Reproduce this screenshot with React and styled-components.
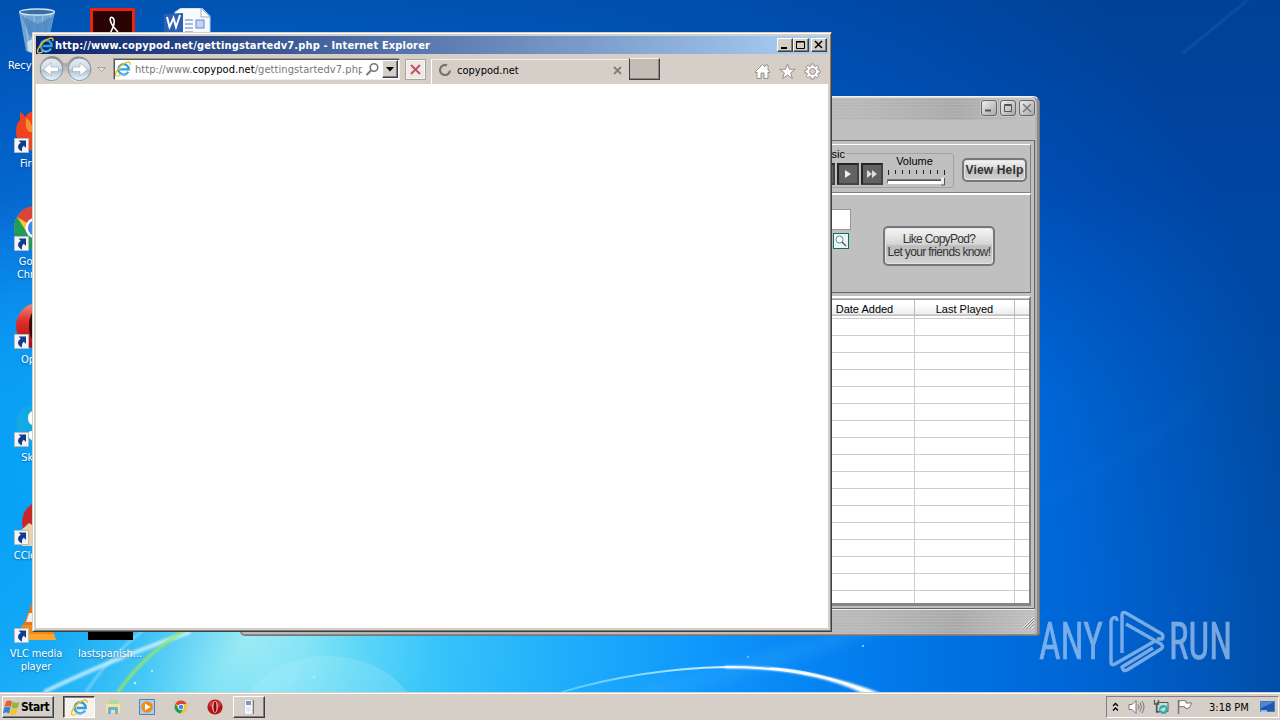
import React from 'react'
import styled, { createGlobalStyle, css } from 'styled-components'

const GlobalStyle = createGlobalStyle`
  * {
    box-sizing: border-box;
  }

  body {
    margin: 0;
    overflow: hidden;
    font-family: "DejaVu Sans Condensed", "DejaVu Sans", sans-serif;
    font-stretch: condensed;
    font-size: 11px;
    color: #000;
  }

  svg {
    display: block;
    flex: none;
  }
`

const Screen = styled.div`
  position: relative;
  width: 1280px;
  height: 720px;
  display: flex;
  flex-direction: column;
  overflow: hidden;
`

const Desktop = styled.div`
  position: relative;
  flex: 1;
  display: flex;
  overflow: hidden;
`

const WallpaperSvg = styled.svg`
  position: absolute;
  top: 0;
  left: 0;
`

const Wallpaper = () => (
  <WallpaperSvg width="1280" height="692" viewBox="0 0 1280 692">
    <defs>
      <radialGradient id="sky" gradientUnits="userSpaceOnUse" cx="250" cy="640" r="1120">
        <stop offset="0" stopColor="#9ceaf4" />
        <stop offset=".05" stopColor="#84e4f6" />
        <stop offset=".1" stopColor="#5cd6f8" />
        <stop offset=".17" stopColor="#36c4fa" />
        <stop offset=".27" stopColor="#22b0fb" />
        <stop offset=".4" stopColor="#0f98fc" />
        <stop offset=".52" stopColor="#0481f2" />
        <stop offset=".63" stopColor="#0071e2" />
        <stop offset=".74" stopColor="#0066d6" />
        <stop offset=".84" stopColor="#0058be" />
        <stop offset=".95" stopColor="#004aa0" />
      </radialGradient>
      <radialGradient id="leftGlow" gradientUnits="userSpaceOnUse" cx="0" cy="500" r="280">
        <stop offset="0" stopColor="#009ef6" stopOpacity=".85" />
        <stop offset=".5" stopColor="#009af4" stopOpacity=".6" />
        <stop offset="1" stopColor="#0094f0" stopOpacity="0" />
      </radialGradient>
      <linearGradient id="dusk" x1="0" y1="0" x2="0" y2="1">
        <stop offset="0" stopColor="#003c90" stopOpacity=".62" />
        <stop offset=".28" stopColor="#0040a4" stopOpacity=".5" />
        <stop offset=".58" stopColor="#0050c0" stopOpacity="0" />
      </linearGradient>
      <linearGradient id="arcFade" gradientUnits="userSpaceOnUse" x1="562" y1="0" x2="800" y2="0">
        <stop offset="0" stopColor="#6fd6ff" stopOpacity=".7" />
        <stop offset=".7" stopColor="#d4f3ff" />
        <stop offset="1" stopColor="#fff" />
      </linearGradient>
      <filter id="soft" filterUnits="userSpaceOnUse" x="0" y="0" width="1280" height="720">
        <feGaussianBlur stdDeviation="1.2" />
      </filter>
      <filter id="haze" filterUnits="userSpaceOnUse" x="0" y="0" width="1280" height="720">
        <feGaussianBlur stdDeviation="7" />
      </filter>
    </defs>
    <rect width="1280" height="692" fill="url(#sky)" />
    <rect width="1280" height="692" fill="url(#dusk)" />
    <rect width="290" height="692" fill="url(#leftGlow)" />
    <path d="M1030 505 Q1110 470 1200 400" stroke="#3b9cff" strokeWidth="8" opacity=".08" fill="none" filter="url(#haze)" />
    <path d="M640 692 Q800 660 960 590" stroke="#58c0ff" strokeWidth="12" opacity=".22" fill="none" filter="url(#haze)" />
    <path d="M1182 54 L1250 -2" stroke="#4c94d8" strokeWidth="1.5" opacity=".35" filter="url(#soft)" />
    <ellipse cx="328" cy="726" rx="90" ry="70" fill="#b9f2fa" opacity=".22" />
    <path d="M44 692 Q110 660 190 632" stroke="#e8fbff" strokeWidth="4" opacity=".7" fill="none" filter="url(#soft)" />
    <path d="M86 692 Q110 655 150 625" stroke="#d6f6ff" strokeWidth="2" opacity=".5" fill="none" filter="url(#soft)" />
    <path d="M118 692 Q146 652 192 626" stroke="#96e860" strokeWidth="3" opacity=".95" fill="none" filter="url(#soft)" />
    <path d="M562 692 Q640 669 725 667 Q810 667 872 693" stroke="url(#arcFade)" strokeWidth="1.8" fill="none" />
    <path d="M725 666 Q806 665 880 693 L862 693 Q808 668 725 668z" fill="#fff" filter="url(#soft)" />
    <path d="M770 668 Q816 670 868 692" stroke="#fff" strokeWidth="1.5" opacity=".8" fill="none" />
    <g fill="#bdf2ff">
      <circle cx="135" cy="683" r="1.3" />
      <circle cx="152" cy="671" r="1" />
      <circle cx="314" cy="677" r="1" />
      <circle cx="863" cy="646" r=".9" />
      <circle cx="748" cy="657" r=".8" />
    </g>
  </WallpaperSvg>
)

/* ---------- shared icons ---------- */

const IeIcon = ({ size = 16 }) => (
  <svg width={size} height={size} viewBox="0 0 16 16" fill="none">
    <path d="M13.2 10.8A5.2 5.2 0 1 1 13.8 8.4H5.2" stroke="#2f9de0" strokeWidth="2.3" />
    <path d="M12.8 11.2A5.2 5.2 0 0 1 4.4 12" stroke="#6cc6f2" strokeWidth="1" />
    <path d="M1 14.8C-1.2 12 6 2.6 12.4 1.1c2.4-.5 3 .9 2.4 2.6" stroke="#efbd20" strokeWidth="1.4" />
    <path d="M1 14.8c1.2.8 3.1-.2 4.5-1.2" stroke="#f5cf42" strokeWidth="1.3" />
  </svg>
)

const ChromeIcon = ({ size = 16 }) => (
  <svg width={size} height={size} viewBox="0 0 16 16">
    <circle cx="8" cy="8" r="7.3" fill="#f5c33b" />
    <path d="M8 8L1.7 4.3A7.3 7.3 0 0 1 14.4 4.5H8z" fill="#dc4437" />
    <path d="M1.7 4.3A7.3 7.3 0 0 0 7.4 15.3L10.6 10 8 8 5 9.6z" fill="#229b58" />
    <circle cx="8" cy="8" r="3.5" fill="#fff" />
    <circle cx="8" cy="8" r="2.7" fill="#4384ee" />
  </svg>
)

const OperaIcon = ({ size = 16 }) => (
  <svg width={size} height={size} viewBox="0 0 16 16">
    <circle cx="8" cy="8" r="7.6" fill="#bb1118" />
    <path d="M2 5a6.8 6.8 0 0 1 12 0L12 8H3z" fill="#e55a50" opacity=".6" />
    <ellipse cx="8" cy="8" rx="2.7" ry="5.8" fill="#f5e9e6" />
    <ellipse cx="8" cy="8" rx="1.6" ry="5.2" fill="#8b0a10" />
  </svg>
)

const OperaDesktopIcon = () => (
  <svg width="48" height="48" viewBox="0 0 48 48">
    <defs>
      <linearGradient id="operaRed" x1="0" y1="0" x2="0" y2="1">
        <stop offset="0" stopColor="#f08a80" />
        <stop offset=".4" stopColor="#dc2f28" />
        <stop offset="1" stopColor="#a50c10" />
      </linearGradient>
    </defs>
    <ellipse cx="26" cy="24" rx="22" ry="23" fill="url(#operaRed)" />
    <ellipse cx="28" cy="24" rx="11" ry="19" fill="#3c0506" />
  </svg>
)

/* ---------- desktop shortcuts ---------- */

const IconColumn = styled.div`
  position: relative;
  width: ${({ $width }) => $width}px;
  height: 100%;
  padding-top: 8px;
  display: flex;
  flex-direction: column;
`

const Shortcut = styled.div`
  height: 98px;
  flex: none;
  display: flex;
  flex-direction: column;
  align-items: center;
  margin-top: ${({ $push }) => ($push ? 490 : 0)}px;
`

const ShortcutPicture = styled.div`
  position: relative;
  width: 48px;
  height: 48px;
  margin-left: ${({ $shift }) => $shift || 0}px;
`

const ShortcutArrow = styled.svg`
  position: absolute;
  left: 2px;
  bottom: 1px;
`

const ShortcutLabel = styled.div`
  margin-top: 3px;
  width: 72px;
  line-height: 13px;
  color: #fff;
  text-align: center;
  text-shadow: 0 1px 2px rgba(0, 30, 80, 0.5);
  letter-spacing: -0.1px;
`

const RecycleBin = () => (
  <svg width="48" height="48" viewBox="0 0 48 48">
    <path d="M7 4l7 39q10 5 20 0l9-39z" fill="#8fb6da" opacity=".8" />
    <path d="M12 6l6 38M22 8l1 37M31 8l-3 37M39 6l-6 38" stroke="#e4f2fc" opacity=".4" />
    <path d="M10 8l16 8 15-8-4 19-10 6-10-6z" fill="#4a86c2" opacity=".75" />
    <path d="M15 34l10-6 8 9-2 6q-8 3-15 0z" fill="#dce7ef" opacity=".85" />
    <ellipse cx="25" cy="4" rx="17.5" ry="3" fill="#3c6da4" stroke="#cde4f5" strokeWidth="1.3" />
  </svg>
)

const FirefoxIcon = () => (
  <svg width="48" height="48" viewBox="0 0 48 48">
    <path d="M8 6q3 1 5 5Q16 6 24 4l4 6q14 0 16 17Q42 44 24 45 6 44 4 27 4 17 8 14z" fill="#f0431f" />
    <path d="M14 12q4 2 6 8l6-2-4 8q-10 2-8-14z" fill="#f9902c" />
    <circle cx="30" cy="27" r="10" fill="#42339a" />
  </svg>
)

const SkypeIcon = () => (
  <svg width="48" height="48" viewBox="0 0 48 48">
    <circle cx="24" cy="24" r="20" fill="#14a8e6" />
    <path d="M26 10q-10 0-10 8t9 8h4v5H20q-5 0-4 5 3 6 11 6 12 0 13-10 0-9-10-11-5-1-4-4h9l1-7z" fill="#fff" />
  </svg>
)

const CCleanerIcon = () => (
  <svg width="48" height="48" viewBox="0 0 48 48">
    <circle cx="31" cy="24" r="21" fill="#c8282a" />
    <circle cx="32" cy="26" r="12" fill="#7db9dc" />
    <path d="M5 36l12-11q8 4 18 18l-4 5H10z" fill="#ead0a6" />
  </svg>
)

const VlcIcon = () => (
  <svg width="48" height="48" viewBox="0 0 48 48">
    <path d="M21 4h6l14 34H8z" fill="#ed7217" />
    <path d="M17 17h14l4 9H14z" fill="#f2f0ec" />
    <path d="M10 29h29l5 15H6z" fill="#f08a14" />
    <path d="M8 38h34l2 6H6z" fill="#ffa42c" />
  </svg>
)

const AcrobatIcon = () => (
  <svg width="48" height="48" viewBox="0 0 48 48">
    <rect x="3.5" y="1.5" width="42" height="45" fill="#2a0404" stroke="#ee230e" strokeWidth="3" />
    <path d="M18 31C25 23 28 13 25 10c-4-3-5 4 5 14M15 35c3-6 10-10 19-9" fill="none" stroke="#fff" strokeWidth="1.6" />
  </svg>
)

const WordIcon = () => (
  <svg width="48" height="48" viewBox="0 0 48 48">
    <path d="M18 0h21l8 8v40H12V4z" fill="#f7faff" stroke="#b9cbe2" />
    <path d="M38 0v9h9z" fill="#fff" stroke="#94aac7" />
    <path d="M22 12h8M22 16h8M22 20h8M22 24h8" stroke="#8caad7" strokeWidth="1.5" />
    <rect x="33" y="12" width="8" height="8" fill="#c3d5f1" stroke="#5d8bd1" />
    <path d="M1 6l19-1v20L1 24z" fill="#2d60b4" />
    <path d="M4 9l2.5 10 4-9 2.5 9 4-12" fill="none" stroke="#fff" strokeWidth="2" />
  </svg>
)

const ArrowBadge = () => (
  <ShortcutArrow width="15" height="15" viewBox="0 0 15 15">
    <path d="M.5.5h14v14H.5z" fill="#f2f6fa" stroke="#b5b9c0" />
    <path d="M4.5 2.5H12V10L9.8 7.8Q7.500 9.500 8 13.500 3.800 11.500 4 8.500 4.300 6 6.800 4.800z" fill="#143c87" />
  </ShortcutArrow>
)

const SHORTCUTS = [
  { label: 'Recycle Bin', icon: <RecycleBin /> },
  { label: 'Firefox', icon: <FirefoxIcon />, linked: true },
  { label: 'Google Chrome', icon: <ChromeIcon size={48} />, linked: true },
  { label: 'Opera', icon: <OperaDesktopIcon />, linked: true },
  { label: 'Skype', icon: <SkypeIcon />, linked: true },
  { label: 'CCleaner', icon: <CCleanerIcon />, linked: true },
  { label: 'VLC media player', icon: <VlcIcon />, linked: true }
]

/* ---------- CopyPod window ---------- */

const brushed = css`
  background:
    repeating-linear-gradient(0deg, rgba(255, 255, 255, 0.1) 0 1px, transparent 1px 3px),
    linear-gradient(90deg, #b8b8b8, #a9a9a9 30%, #bcbcbc 55%, #b8b8b8 78%, #aaa 90%, #c0c0c0);
`

const PodWindow = styled.div`
  position: absolute;
  left: 240px;
  top: 96px;
  width: 800px;
  height: 540px;
  display: flex;
  flex-direction: column;
  padding: 1px 4px 1px 3px;
  border-radius: 7px 7px 4px 5px;
  border: 1px solid #777;
  border-top-color: #f2f2f2;
  box-shadow: inset -2px 0 0 #8c8c8c, inset 0 -1px 0 #888, inset 0 1px 0 #ddd;
  background: #b4b4b4;
  font-family: "Liberation Sans", Arial, sans-serif;
`

const PodTitle = styled.div`
  height: 22px;
  flex: none;
  display: flex;
  justify-content: flex-end;
  align-items: center;
  gap: 3px;
  padding-bottom: 2px;
  ${brushed}
`

const PodTitleButton = styled.div`
  width: 16px;
  height: 16px;
  display: grid;
  place-items: center;
  border: 1px solid #686868;
  border-radius: 3px;
  background: linear-gradient(135deg, #eee, #a7a7a7);
  box-shadow: 0 0 0 1px #c6c6c6;
`

const PodMenu = styled.div`
  height: 20px;
  flex: none;
  background: #c0c0c0;
`

const PodBody = styled.div`
  flex: 1;
  min-height: 0;
  display: flex;
  flex-direction: column;
  padding: 3px 3px 2px 0;
  border-top: 1px solid #6c6c6c;
  border-right: 1px solid #666;
  border-bottom: 1px solid #666;
  background: #c0c0c0;
`

const PlayerPanel = styled.div`
  height: 49px;
  flex: none;
  display: flex;
  justify-content: flex-end;
  padding: 8px 3px 0 0;
  border-top: 1px solid #fff;
  border-bottom: 1px solid #808080;
  border-right: 1px solid #808080;
`

const MusicGroup = styled.div`
  width: 146px;
  height: 35px;
  margin: 0 8px 0 0;
  padding: 0 6px 0 0;
  display: flex;
  justify-content: flex-end;
  align-items: flex-end;
  border: 1px solid #a2a2a2;
  border-radius: 3px;
`

// sits over the top edge of its group
const GroupTitle = styled.div`
  position: absolute;
  left: 561px;
  top: 51px;
  width: 44px;
  padding-right: 1px;
  text-align: right;
  line-height: 12px;
  background: #c0c0c0;
`

const PlayerButton = styled.div`
  width: 22px;
  height: 22px;
  margin: 0 2px 2px 0;
  flex: none;
  display: grid;
  place-items: center;
  background: #626262;
  border: 2px solid #242424;
  border-right-color: #444;
  border-bottom-color: #444;
`

const Volume = styled.div`
  width: 61px;
  margin-left: 1px;
  padding-bottom: 1px;
  flex: none;
  display: flex;
  flex-direction: column;
  align-items: center;
`

const VolumeLabel = styled.div`
  font-size: 11px;
  line-height: 13px;
  padding-right: 4px;
`

const SkinButton = styled.div`
  width: ${({ $width }) => $width}px;
  height: ${({ $height }) => $height}px;
  flex: none;
  display: flex;
  flex-direction: column;
  justify-content: center;
  align-items: center;
  white-space: nowrap;
  line-height: 13px;
  border: 2px solid #777;
  border-radius: 5px;
  background: linear-gradient(#f6f6f6, #d5d5d5 45%, #bcbcbc 50%, #d4d4d4);
  box-shadow: inset 0 0 0 1px #e4e4e4;
  color: #333;
`

const HelpButton = styled(SkinButton)`
  margin-top: 5px;
  font-size: 12px;
  font-weight: 700;
  letter-spacing: 0.15px;
`

const LikeButton = styled(SkinButton)`
  margin: 31px 35px 0 32px;
  font-size: 12px;
`

const LikeLine = styled.div`
  letter-spacing: ${({ $spacing }) => $spacing}px;
`

const SearchPanel = styled.div`
  height: 100px;
  flex: none;
  display: flex;
  justify-content: flex-end;
  border-top: 2px solid #fff;
  border-bottom: 1px solid #666;
  border-right: 1px solid #777;
`

const SearchBox = styled.div`
  display: flex;
  flex-direction: column;
  align-items: flex-end;
  gap: 3px;
  padding-top: 14px;
`

const SearchInput = styled.div`
  width: 150px;
  height: 21px;
  background: #fff;
  border: 1px solid #999;
`

const SearchButton = styled.div`
  width: 16px;
  height: 16px;
  margin-right: 2px;
  border: 1px solid #176b62;
  background: #e8f6f6;
`

const TrackTable = styled.div`
  margin-top: 3px;
  flex: 1;
  min-height: 0;
  display: flex;
  flex-direction: column;
  padding-top: 1px;
  border-top: 2px solid #fff;
  border-right: 2px solid #808080;
  border-bottom: 3px solid #858585;
  background: #c0c0c0;
  overflow: hidden;
`

const tableColumns = css`
  display: grid;
  grid-template-columns: 1fr 100px 100px 15px;
`

const TrackHeader = styled.div`
  ${tableColumns}
  height: 20px;
  flex: none;
  border-top: 1px solid #9d9d9d;
  border-bottom: 1px solid #ccc;
  background: linear-gradient(#fff 25%, #ececec 80%, #bbb 81%, #bbb 86%, #fff 87%);
  font-size: 11px;
  line-height: 18px;
  text-align: center;

  > div + div {
    border-left: 1px solid #bbb;
  }
`

const TrackRow = styled.div`
  ${tableColumns}
  height: 17px;
  flex: none;
  border-bottom: 1px solid #ccc;
  background: #fff;

  > div + div {
    border-left: 1px solid #ccc;
  }
`

const PodStatus = styled.div`
  height: 25px;
  flex: none;
  display: flex;
  justify-content: flex-end;
  align-items: flex-end;
  padding: 0 1px 5px 0;
  border-top: 1px solid #eee;
  ${brushed}
`

const TICKS = Array.from({ length: 9 }, (_, i) => 2 + i * 7)

const CopyPod = () => (
  <PodWindow>
    <PodTitle>
      <PodTitleButton>
        <svg width="10" height="10"><path d="M1 7.5h6" stroke="#555" strokeWidth="2" /></svg>
      </PodTitleButton>
      <PodTitleButton>
        <svg width="10" height="10"><path d="M1.5 1.5h7v7h-7zM1.5 2.5h7" fill="none" stroke="#555" /></svg>
      </PodTitleButton>
      <PodTitleButton>
        <svg width="10" height="10"><path d="M1 1l8 8M9 1L1 9" stroke="#777" strokeWidth="1.5" /></svg>
      </PodTitleButton>
    </PodTitle>
    <PodMenu />
    <PodBody>
      <PlayerPanel>
        <MusicGroup>
          <PlayerButton />
          <PlayerButton>
            <svg width="10" height="10"><path d="M2 1l6 4-6 4z" fill="#eee" /></svg>
          </PlayerButton>
          <PlayerButton>
            <svg width="12" height="10"><path d="M1 1l5 4-5 4zM6 1l5 4-5 4z" fill="#ddd" /></svg>
          </PlayerButton>
          <Volume>
            <VolumeLabel>Volume</VolumeLabel>
            <svg width="61" height="18">
              {TICKS.map((x, i) => (
                <path key={x} d={`M${x + 0.5} 2v${i === 0 || i === 8 ? 5 : 4}`} stroke="#222" />
              ))}
              <path d="M1.5 15v-3.5h56" fill="none" stroke="#777" />
              <path d="M2 12h56v4H2z" fill="#fff" />
              <path d="M2 12.5h55" stroke="#555" />
              <path d="M55 10l2-1 2 1v7h-4z" fill="#e9e9e9" />
              <path d="M58.5 10v7H55" fill="none" stroke="#555" />
            </svg>
          </Volume>
        </MusicGroup>
        <GroupTitle>Music</GroupTitle>
        <HelpButton $width={65} $height={24}>View Help</HelpButton>
      </PlayerPanel>
      <SearchPanel>
        <SearchBox>
          <SearchInput />
          <SearchButton>
            <svg width="14" height="14" viewBox="0 0 14 14" fill="none">
              <circle cx="5.5" cy="5.5" r="3.5" fill="#fff" stroke="#5b8c94" />
              <path d="M8 8l4 4" stroke="#4c5c70" strokeWidth="1.5" />
            </svg>
          </SearchButton>
        </SearchBox>
        <LikeButton $width={112} $height={40}>
          <LikeLine $spacing={-0.7}>Like CopyPod?</LikeLine>
          <LikeLine $spacing={-0.65}>Let your friends know!</LikeLine>
        </LikeButton>
      </SearchPanel>
      <TrackTable>
        <TrackHeader>
          <div />
          <div>Date Added</div>
          <div>Last Played</div>
          <div />
        </TrackHeader>
        {Array.from({ length: 17 }, (_, i) => (
          <TrackRow key={i}>
            <div />
            <div />
            <div />
            <div />
          </TrackRow>
        ))}
      </TrackTable>
    </PodBody>
    <PodStatus>
      <svg width="13" height="13">
        <path d="M1 13L13 1M4 13l9-9M7 13l6-6M10 13l3-3" stroke="#eee" />
        <path d="M2 13L13 2M5 13l8-8M8 13l5-5" stroke="#888" />
      </svg>
    </PodStatus>
  </PodWindow>
)

/* ---------- Internet Explorer window ---------- */

const IeWindow = styled.div`
  position: absolute;
  left: 32px;
  top: 32px;
  width: 800px;
  height: 600px;
  display: flex;
  flex-direction: column;
  border: 1px solid #d4d0c8;
  border-right-color: #404040;
  border-bottom-color: #404040;
  padding: 3px;
  background: #d4d0c8;
  box-shadow: inset 1px 1px 0 #fff, inset -1px -1px 0 #808080;
`

const IeTitle = styled.div`
  height: 18px;
  flex: none;
  display: flex;
  align-items: center;
  padding: 0 1px 0 1px;
  background: linear-gradient(90deg, #0a246a, #a6caf0 96%);
  color: #fff;
`

const IeTitleText = styled.div`
  flex: 1;
  padding-left: 1px;
  font-weight: 700;
  white-space: nowrap;
  letter-spacing: 0.16px;
`

const bevel = css`
  background: #d4d0c8;
  border: 1px solid #fff;
  border-right-color: #404040;
  border-bottom-color: #404040;
  box-shadow: inset -1px -1px 0 #808080;
`

const CaptionButton = styled.div`
  ${bevel}
  width: 16px;
  height: 14px;
  margin-left: ${({ $gap }) => $gap || 0}px;
  display: grid;
  place-items: center;
`

const IeToolbar = styled.div`
  height: 30px;
  flex: none;
  display: flex;
  align-items: center;
  padding: 0 7px 0 2px;
  background: #d6cfc8;
`

const AddressBar = styled.div`
  width: 286px;
  height: 21px;
  margin-left: 6px;
  display: flex;
  align-items: center;
  padding: 1px 1px 1px 0;
  border: 1px solid #555;
  border-right-color: #eee;
  border-bottom-color: #eee;
  box-shadow: -1px -1px 0 #999;
  background: #fff;
`

const Url = styled.div`
  width: 227px;
  margin-left: 4px;
  padding-top: 1px;
  overflow: hidden;
  white-space: nowrap;
  color: #777;
  letter-spacing: 0.06px;

  b {
    font-weight: 400;
    color: #000;
  }
`

const DropButton = styled.div`
  ${bevel}
  width: 16px;
  height: 18px;
  margin-left: auto;
  display: grid;
  place-items: center;
`

const StopButton = styled.div`
  width: 21px;
  height: 21px;
  margin-left: 5px;
  display: grid;
  place-items: center;
  border: 1px solid #aaa39c;
  background: #eee8e6;
  box-shadow: inset 0 0 0 1px #f9f5f2;
`

const Tab = styled.div`
  width: 197px;
  height: 25px;
  margin: 1px 0 0 5px;
  align-self: flex-end;
  display: flex;
  align-items: center;
  padding: 0 6px 4px 6px;
  border-left: 1px solid #fff;
  border-top: 1px solid #f5f2ee;
`

const TabName = styled.div`
  flex: 1;
  padding-left: 5px;
`

const NewTab = styled.div`
  width: 31px;
  height: 22px;
  margin-left: 1px;
  border: 1px solid #f3efea;
  border-left-color: #404040;
  border-right: 1px solid #404040;
  border-bottom: 1px solid #404040;
  box-shadow: inset -1px -1px 0 #888;
  background: #c4bdb6;
`

const ToolIcons = styled.div`
  margin-left: auto;
  display: flex;
  gap: 8px;
  padding-top: 4px;
`

const Page = styled.div`
  flex: 1;
  background: #fff;
`

const NavButtons = () => (
  <svg width="70" height="28" viewBox="0 0 70 28">
    <defs>
      <linearGradient id="orb" x1="0" y1="0" x2="0" y2="1">
        <stop offset="0" stopColor="#e6ecf1" />
        <stop offset=".48" stopColor="#d2dce5" />
        <stop offset=".52" stopColor="#a9bfcf" />
        <stop offset="1" stopColor="#eaf8ff" />
      </linearGradient>
      <linearGradient id="rim" x1="0" y1="0" x2="0" y2="1">
        <stop offset="0" stopColor="#8a8886" />
        <stop offset=".6" stopColor="#c8c3be" />
        <stop offset="1" stopColor="#f4f1ed" />
      </linearGradient>
    </defs>
    <path d="M13.5 1a12.5 12.5 0 0 1 11 6q3 3 6 0a12.5 12.5 0 1 1 0 14q-3-2-6 0a12.5 12.5 0 1 1-11-20z" fill="url(#rim)" />
    <circle cx="13.5" cy="14.3" r="11.3" fill="url(#orb)" stroke="#7f929f" />
    <circle cx="41.5" cy="14.3" r="11.3" fill="url(#orb)" stroke="#7f929f" />
    <path d="M5.5 14.3l7.5-6.5v4.2h7.5v4.6H13v4.2z" fill="#fff" stroke="#a3b5c3" strokeWidth=".8" />
    <path d="M49.5 14.3l-7.5-6.5v4.2h-7.5v4.6H42v4.2z" fill="#fff" stroke="#a3b5c3" strokeWidth=".8" />
    <path d="M59.5 12.5h8l-4 4z" fill="#e8e2dc" stroke="#aaa39b" />
  </svg>
)

const InternetExplorer = () => (
  <IeWindow>
    <IeTitle>
      <IeIcon size={17} />
      <IeTitleText>http://www.copypod.net/gettingstartedv7.php - Internet Explorer</IeTitleText>
      <CaptionButton>
        <svg width="12" height="10"><path d="M2 8h6" stroke="#000" strokeWidth="2" /></svg>
      </CaptionButton>
      <CaptionButton>
        <svg width="12" height="10"><path d="M1.5 1.5h8v7h-8zM1 2h9" fill="none" stroke="#000" /></svg>
      </CaptionButton>
      <CaptionButton $gap={2}>
        <svg width="12" height="10"><path d="M2 1l7 7M9 1L2 8" stroke="#000" strokeWidth="1.5" /></svg>
      </CaptionButton>
    </IeTitle>
    <IeToolbar>
      <NavButtons />
      <AddressBar>
        <IeIcon size={16} />
        <Url>http://www.<b>copypod.net</b>/gettingstartedv7.php</Url>
        <svg width="18" height="16" viewBox="0 0 18 16" fill="none" stroke="#777">
          <circle cx="12" cy="6.5" r="3.8" strokeWidth="1.6" />
          <path d="M9 9.500l-4.500 4.500" strokeWidth="2" />
        </svg>
        <DropButton>
          <svg width="8" height="5"><path d="M0 0h8L4 4.5z" /></svg>
        </DropButton>
      </AddressBar>
      <StopButton>
        <svg width="13" height="13"><path d="M2 2l9 9M11 2l-9 9" stroke="#c5545a" strokeWidth="2" /></svg>
      </StopButton>
      <Tab>
        <svg width="14" height="14" viewBox="0 0 14 14" fill="none">
          <path d="M9 2.4A5 5 0 1 0 12 7.500" stroke="#76716c" strokeWidth="2.2" />
        </svg>
        <TabName>copypod.net</TabName>
        <svg width="9" height="9"><path d="M1 1l7 7M8 1L1 8" stroke="#827d78" strokeWidth="1.8" /></svg>
      </Tab>
      <NewTab />
      <ToolIcons>
        <svg width="17" height="17" viewBox="0 0 17 17" fill="#fff" stroke="#96918b">
          <path d="M1 9L8.5 1.5 11 4V2h3v5l2 2-1 1-1-1v6.5h-4V10H7v5.5H3V9L2 10z" />
        </svg>
        <svg width="17" height="17" viewBox="0 0 17 17" fill="#fff" stroke="#96918b">
          <path d="M8.5 1l2 5.3h5.7l-4.5 3.5 1.7 5.7-4.9-3.4-4.9 3.4 1.7-5.7L.8 6.3h5.7z" />
        </svg>
        <svg width="17" height="17" viewBox="0 0 17 17" fill="#fff" stroke="#96918b">
          <path d="M7 1h3v2l1.5.6L13 2.2 14.9 4l-1.4 1.5.6 1.5h2v3h-2l-.6 1.5 1.4 1.5-1.9 1.9-1.5-1.4-1.5.6v2H7v-2l-1.5-.6L4 14.9 2.1 13l1.4-1.5L2.9 10h-2V7h2l.6-1.5L2.1 4 4 2.2l1.5 1.4L7 3z" />
          <circle cx="8.5" cy="8.5" r="3" fill="#d6cfc8" />
        </svg>
      </ToolIcons>
    </IeToolbar>
    <Page />
  </IeWindow>
)

/* ---------- watermark ---------- */

const WatermarkSvg = styled.svg`
  position: absolute;
  left: 1036px;
  top: 600px;
  opacity: 0.66;
  overflow: visible;
`

const Watermark = () => (
  <WatermarkSvg width="220" height="84" viewBox="0 -6 220 84">
    <g fill="#b7d3f5" fontFamily="Roboto, sans-serif" fontSize="52" fontWeight="400" stroke="#b7d3f5" strokeWidth=".6">
      <text x="3" y="53" textLength="64" lengthAdjust="spacingAndGlyphs">ANY</text>
      <text x="133" y="53" textLength="63" lengthAdjust="spacingAndGlyphs">RUN</text>
    </g>
    <g fill="none" stroke="#b7d3f5" strokeWidth="3.4" strokeLinejoin="round">
      <path d="M81 15Q81 10 77 12 75 13 75 17V56Q75 60 79 58L119 35" />
      <path d="M86 47V9Q86 5 90 7L126 28Q128 31 126 33H121" />
      <path d="M90 18L125 38Q128 41 125 43L91 64Q87 66 86 61L117 42" />
    </g>
  </WatermarkSvg>
)

/* ---------- taskbar ---------- */

const TaskbarRoot = styled.div`
  position: relative;
  height: 28px;
  flex: none;
  display: flex;
  align-items: flex-start;
  padding: 2px 1px 0 2px;
  border-top: 1px solid #d4d0c8;
  box-shadow: inset 0 1px 0 #fff;
  background: #d6cfc7;
`

const StartButton = styled.div`
  ${bevel}
  width: 52px;
  height: 22px;
  margin: 1px 9px 0 0;
  display: flex;
  align-items: center;
  gap: 1px;
  font-size: 12px;
  font-weight: 700;
  letter-spacing: -0.5px;
`

const TaskButton = styled.div`
  width: 32px;
  height: 22px;
  margin-top: 1px;
  margin-right: ${({ $after }) => $after || 0}px;
  display: grid;
  place-items: center;
  ${({ $state }) => $state === 'raised' && bevel}
  ${({ $state }) =>
    $state === 'pressed' &&
    css`
      background: #f5f2ee;
      border: 1px solid #404040;
      border-right-color: #fff;
      border-bottom-color: #fff;
      box-shadow: inset 1px 1px 0 #808080;
    `}
`

const Tray = styled.div`
  width: 173px;
  height: 22px;
  margin: 1px 0 0 auto;
  display: flex;
  align-items: center;
  padding-left: 5px;
  border: 1px solid #808080;
  border-right-color: #fff;
  border-bottom-color: #fff;
`

const TrayIcons = styled.div`
  display: flex;
  align-items: center;
  gap: 8px;
  margin-left: 8px;
`

const Clock = styled.div`
  width: 42px;
  margin: 0 9px 0 15px;
  white-space: nowrap;
`

const WindowsFlag = () => (
  <svg width="17" height="17" viewBox="0 0 17 17">
    <path d="M3 2.5q3-2 6.2 0L7.8 8Q4.5 6 1.5 8z" fill="#e9602c" />
    <path d="M9.8 2.8q3 2 6.7.2L15 8.5q-3.4 2-6.6 0z" fill="#8dbb3c" />
    <path d="M1.2 8.8q3-2 6.3 0L6 14.5q-3-2-6.2 0z" fill="#3d80cf" />
    <path d="M8.2 9.2q3 2 6.6.2L13.3 15q-3.3 2-6.7 0z" fill="#f6c331" />
  </svg>
)

const Taskbar = () => (
  <TaskbarRoot>
    <StartButton>
      <WindowsFlag />
      Start
    </StartButton>
    <TaskButton $state="pressed" $after={2}>
      <IeIcon size={17} />
    </TaskButton>
    <TaskButton $after={2}>
      <svg width="16" height="16" viewBox="0 0 16 16">
        <path d="M1 2h5l1 1h7v11H1z" fill="#ecd276" />
        <path d="M4 1h9v5H4z" fill="#b2d8a5" />
        <path d="M1 5h14v9H1z" fill="#f5e49b" />
        <path d="M3 15V9q0-1 1-1h8q1 0 1 1v6h-3v-4H6v4z" fill="#69b4db" />
      </svg>
    </TaskButton>
    <TaskButton $after={2}>
      <svg width="16" height="16" viewBox="0 0 16 16">
        <path d="M.5.5h15v15H.5z" fill="#a9cdea" stroke="#4b84b8" />
        <circle cx="8" cy="8" r="5.8" fill="#f28a17" />
        <path d="M6 4.5l5.5 3.5L6 11.5z" fill="#fff" />
      </svg>
    </TaskButton>
    <TaskButton $after={2}><ChromeIcon size={14} /></TaskButton>
    <TaskButton $after={2}><OperaIcon /></TaskButton>
    <TaskButton $state="raised">
      <svg width="10" height="16" viewBox="0 0 10 16">
        <path d="M.5.5h8v15h-8z" fill="#f4f4fa" stroke="#c9c9d2" />
        <path d="M2 2h5v4H2z" fill="#8595b5" />
        <circle cx="4.5" cy="10.5" r="2" fill="#dfe1ea" />
        <path d="M9.5 1v14" stroke="#777" />
      </svg>
    </TaskButton>
    <Tray>
      <svg width="8" height="10" fill="none" stroke="#000" strokeWidth="1.3">
        <path d="M1 4l2.5-2.5L6 4M1 8.5L3.5 6 6 8.5" />
      </svg>
      <TrayIcons>
        <svg width="17" height="16" viewBox="0 0 17 16" fill="none" stroke="#777">
          <path d="M1 5.5h3l4-4v13l-4-4H1z" fill="#fff" />
          <path d="M10 5.5q2 2.5 0 5M12 3.5q3 4.500 0 9M14 2q4 6 0 12" />
        </svg>
        <svg width="16" height="16" viewBox="0 0 16 16">
          <path d="M4 3.5h11v9H4z" fill="#bfe2dd" stroke="#555" />
          <path d="M1.5 1v4h4V1M3.500 5v8h3" fill="none" stroke="#555" strokeWidth="1.3" />
          <circle cx="10.5" cy="10.5" r="4.5" fill="#42a6a0" />
          <path d="M7 11q3-4 6-2l-2 4z" fill="#a5e5e0" />
        </svg>
        <svg width="17" height="16" viewBox="0 0 17 16" fill="#fff" stroke="#777">
          <path d="M1.5 1v14" strokeWidth="1.5" />
          <path d="M2 2q4-1 7 0v2h6l-3 5q-2 1-4 0V8Q5 7 2 8z" />
        </svg>
      </TrayIcons>
      <Clock>3:18 PM</Clock>
      <svg width="16" height="14" viewBox="0 0 16 14">
        <path d="M.5 1.500h14v10H.5z" fill="#1f58b4" stroke="#4a79b8" />
        <path d="M1 2h13L1 8z" fill="#4d87d6" />
        <path d="M1 11h6" stroke="#c5d8f0" strokeWidth="1.5" />
      </svg>
    </Tray>
  </TaskbarRoot>
)

const App = () => (
  <Screen>
    <GlobalStyle />
    <Desktop>
      <Wallpaper />
      <IconColumn $width={72}>
        {SHORTCUTS.map(({ label, icon, linked }) => (
          <Shortcut key={label}>
            <ShortcutPicture>
              {icon}
              {linked && <ArrowBadge />}
            </ShortcutPicture>
            <ShortcutLabel>{label}</ShortcutLabel>
          </Shortcut>
        ))}
      </IconColumn>
      <IconColumn $width={76}>
        <Shortcut>
          <ShortcutPicture $shift={3}><AcrobatIcon /></ShortcutPicture>
        </Shortcut>
        <Shortcut $push>
          <ShortcutPicture>
            <svg width="48" height="48"><path d="M2 4h45v40H2z" /></svg>
          </ShortcutPicture>
          <ShortcutLabel>lastspanish...</ShortcutLabel>
        </Shortcut>
      </IconColumn>
      <IconColumn $width={76}>
        <Shortcut>
          <ShortcutPicture $shift={2}><WordIcon /></ShortcutPicture>
        </Shortcut>
      </IconColumn>
      <Watermark />
      <CopyPod />
      <InternetExplorer />
    </Desktop>
    <Taskbar />
  </Screen>
)

export default App
